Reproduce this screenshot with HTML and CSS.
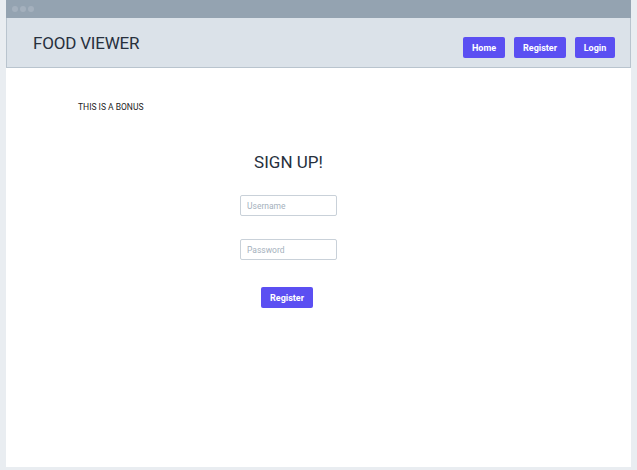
FILE: index.html
```html
<!DOCTYPE html>
<html>
<head>
<meta charset="utf-8">
<link rel="stylesheet" href="styles.css">
</head>
<body>
<div class="window">
  <div class="titlebar">
    <span class="dot"></span><span class="dot"></span><span class="dot"></span>
  </div>
  <header class="header">
    <div class="brand">FOOD VIEWER</div>
    <nav class="nav">
      <a class="btn btn-home">Home</a>
      <a class="btn btn-register">Register</a>
      <a class="btn btn-login">Login</a>
    </nav>
  </header>
  <main class="main">
    <p class="bonus">THIS IS A BONUS</p>
    <div class="form">
      <h1 class="title">SIGN UP!</h1>
      <input class="field" type="text" placeholder="Username">
      <input class="field" type="password" placeholder="Password">
      <button class="btn submit">Register</button>
    </div>
  </main>
</div>
</body>
</html>
```
FILE: styles.css
```css
html, body {
  margin: 0;
  padding: 0;
}
body {
  background: #e9edf1;
  font-family: Roboto, "Liberation Sans", sans-serif;
  color: #27303d;
  width: 637px;
  height: 470px;
  overflow: hidden;
}
.window {
  margin-left: 6px;
  width: 625px;
  height: 467px;
  background: #ffffff;
  display: flex;
  flex-direction: column;
}
.titlebar {
  height: 18px;
  background: #94a3b1;
  display: flex;
  align-items: center;
  gap: 2px;
  padding-left: 6px;
}
.dot {
  width: 6px;
  height: 6px;
  border-radius: 50%;
  background: #a4b0bd;
}
.header {
  height: 49px;
  background: #dbe2e9;
  border: 1px solid #b9c4ce;
  border-top: none;
  display: flex;
  align-items: flex-start;
  justify-content: space-between;
  padding: 0 15px 0 26px;
}
.brand {
  margin-top: 15px;
  font-size: 17px;
  letter-spacing: -0.2px;
  color: #27303d;
}
.nav {
  margin-top: 19px;
  display: flex;
  gap: 9px;
}
.btn {
  display: flex;
  align-items: center;
  justify-content: center;
  height: 21px;
  padding: 0;
  background: #5b4ff2;
  color: #ffffff;
  border: none;
  border-radius: 2px;
  font-family: Roboto, "Liberation Sans", sans-serif;
  font-size: 9px;
  font-weight: 700;
}
.btn-home {
  width: 42px;
}
.btn-register {
  width: 52px;
}
.btn-login {
  width: 40px;
}
.main {
  flex: 1;
  position: relative;
}
.bonus {
  margin: 34px 0 0 72px;
  font-size: 8.5px;
  color: #222;
}
.form {
  margin-left: 234px;
  width: 97px;
  display: flex;
  flex-direction: column;
  align-items: center;
}
.title {
  margin: 40px 0 0 0;
  font-size: 17px;
  font-weight: 400;
  white-space: nowrap;
  color: #27303d;
  line-height: 20px;
}
.field {
  box-sizing: border-box;
  width: 97px;
  height: 21px;
  margin-top: 23px;
  border: 1px solid #c9d1d9;
  border-radius: 2px;
  padding: 0 6px;
  font-family: Roboto, "Liberation Sans", sans-serif;
  font-size: 8.5px;
  color: #333;
  outline: none;
}
.field::placeholder {
  color: #a5b1bd;
}
.submit {
  margin-top: 27px;
  width: 52px;
  align-self: flex-start;
  margin-left: 21px;
}
```
